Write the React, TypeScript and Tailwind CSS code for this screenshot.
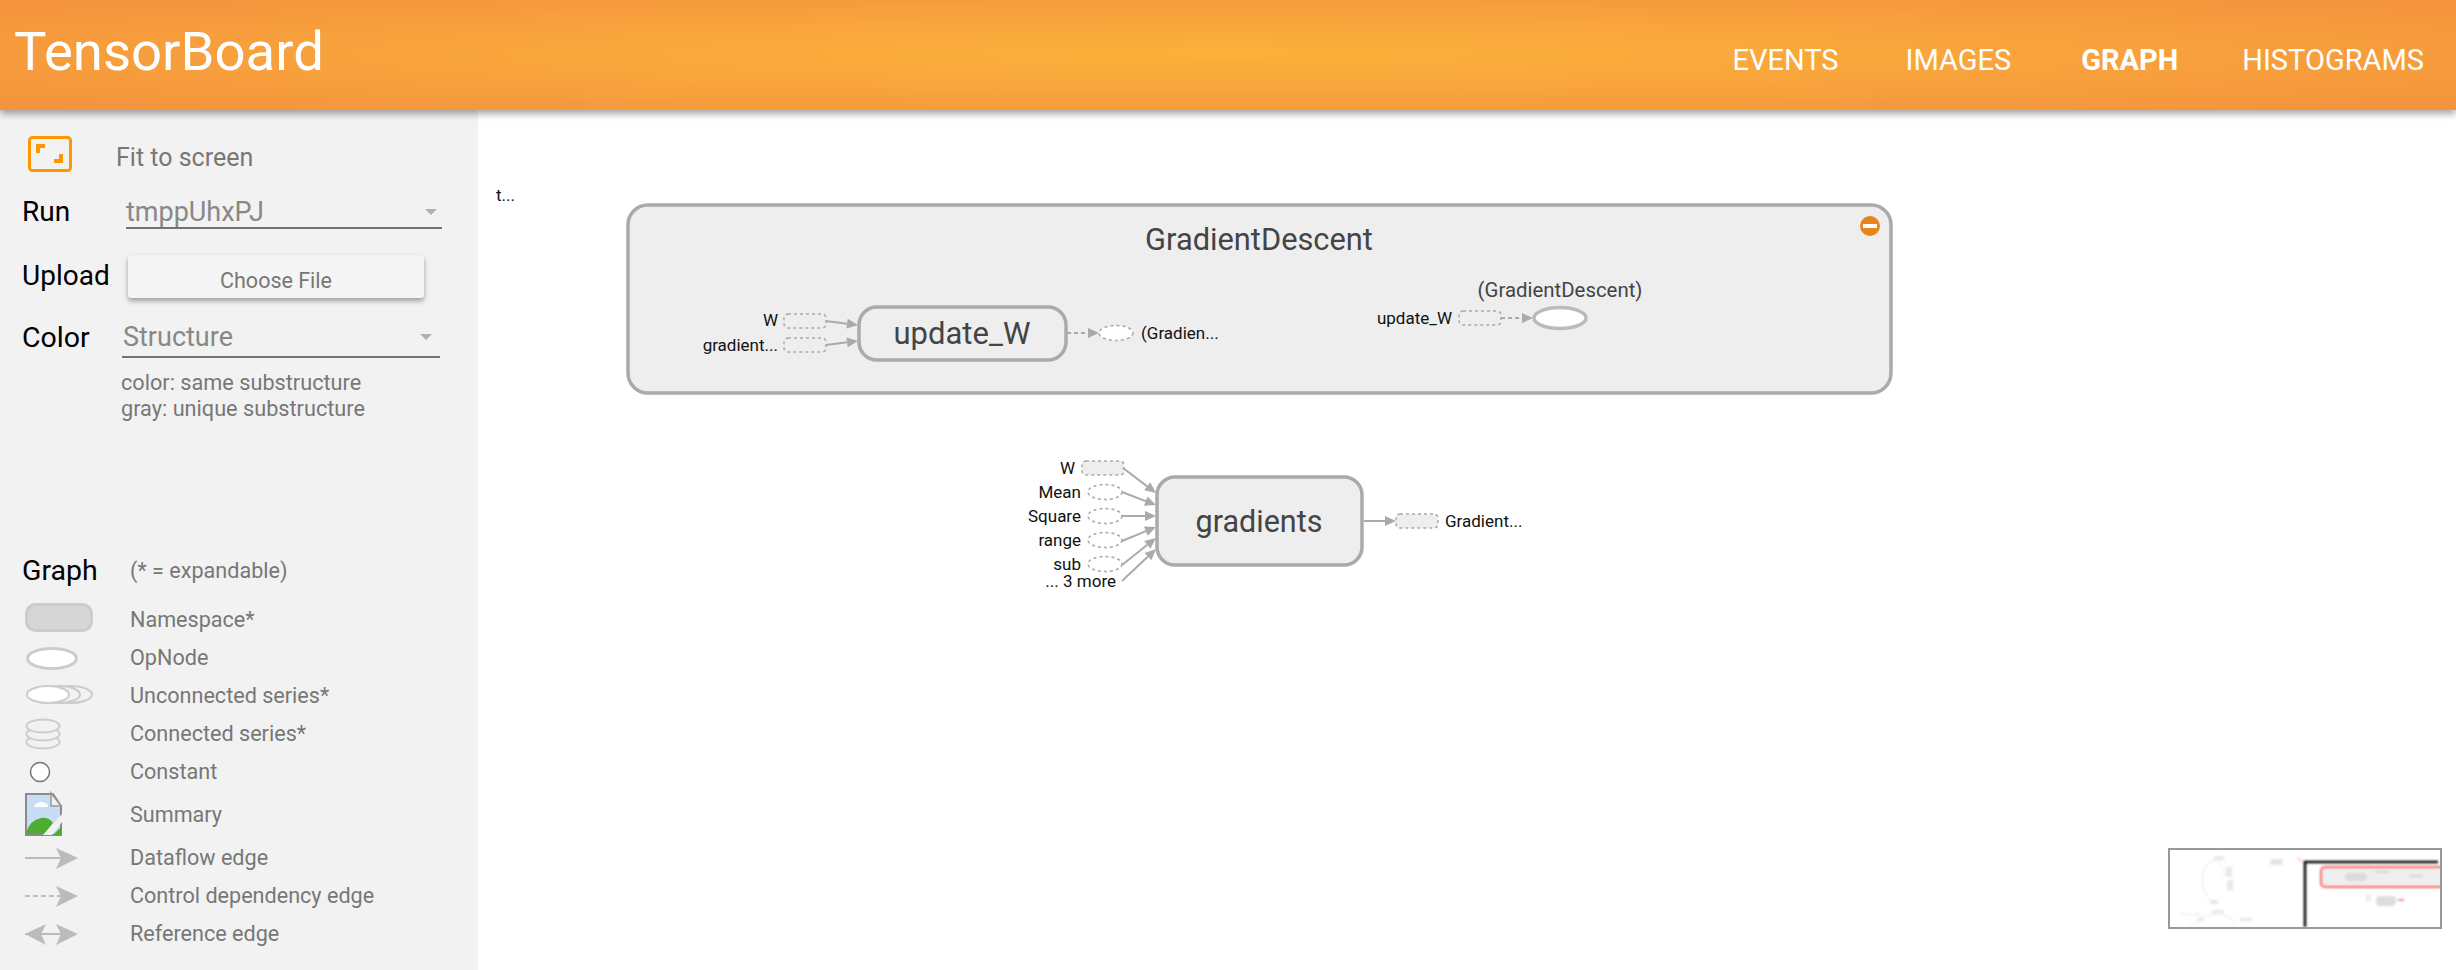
import React from "react";

const font = { fontFamily: "Roboto, sans-serif" };

function Caret() {
  return <span className="w-0 h-0 border-x-[6px] border-x-transparent border-t-[6px] border-t-[#b0b0b0]" />;
}

function LegendRow({ h, label, children }: { h: string; label: string; children?: React.ReactNode }) {
  return (
    <div className={`flex items-center ${h}`}>
      <svg className="w-[107px] h-full shrink-0 overflow-visible" viewBox={h === "h-[48px]" ? "0 0 107 48" : h === "h-[39px]" ? "0 0 107 39" : h === "h-[37px]" ? "0 0 107 37" : "0 0 107 38"}>
        {children}
      </svg>
      <span className="text-[21.6px] leading-none text-[#777] whitespace-nowrap">{label}</span>
    </div>
  );
}

function Arrow({ dash, both }: { dash?: boolean; both?: boolean }) {
  return (
    <g>
      <line x1="2" y1="19" x2="44" y2="19" stroke="#bbb" strokeWidth="2" strokeDasharray={dash ? "5 3" : undefined} />
      <polygon points="33,9 55,19 33,30 38,19" fill="#bbb" />
      {both && <polygon points="23,9 2,19 23,30 18,19" fill="#bbb" />}
    </g>
  );
}

function BrokenImage() {
  return (
    <g>
      <path d="M3 3h27l8 12v29h-35z" fill="#c9dcf5" stroke="#8a8a8a" strokeWidth="2" />
      <path d="M28 2v13h10z" fill="#f2f2f2" stroke="#999" strokeWidth="1.5" />
      <path d="M11 16q1-4 4-4q3-3 6 0q4 0 4 4z" fill="#fff" />
      <path d="M3 42q4-13 15-15q8-1 12 5l-9 11h-18z" fill="#4cae2e" />
      <path d="M39 23v8l-10 13h-9z" fill="#f2f2f2" />
      <path d="M30 44l8-8v8z" fill="#4cae2e" />
    </g>
  );
}

function Edge({ x1, y1, x2, y2, dash }: { x1: number; y1: number; x2: number; y2: number; dash?: boolean }) {
  const a = Math.atan2(y2 - y1, x2 - x1);
  const L = 11;
  const W = 5;
  const bx = x2 - L * Math.cos(a);
  const by = y2 - L * Math.sin(a);
  const px = -Math.sin(a) * W;
  const py = Math.cos(a) * W;
  return (
    <g>
      <line x1={x1} y1={y1} x2={bx} y2={by} stroke="#aaa" strokeWidth="2" strokeDasharray={dash ? "4 3" : undefined} />
      <polygon points={`${x2},${y2} ${bx + px},${by + py} ${bx - px},${by - py}`} fill="#aaa" />
    </g>
  );
}

function Label({ x, y, end, children }: { x: number; y: number; end?: boolean; children: string }) {
  return (
    <text x={x} y={y + 6} fontSize="17" fill="#111" textAnchor={end ? "end" : "start"}>
      {children}
    </text>
  );
}

function DashBox({ x, y, fill = "none" }: { x: number; y: number; fill?: string }) {
  return <rect x={x} y={y} width="42" height="14" rx="4" fill={fill} stroke="#aaa" strokeWidth="1.5" strokeDasharray="3 3" />;
}

function DashEllipse({ cx, cy, fill = "none" }: { cx: number; cy: number; fill?: string }) {
  return <ellipse cx={cx} cy={cy} rx="17" ry="7.5" fill={fill} stroke="#aaa" strokeWidth="1.5" strokeDasharray="3 3" />;
}

function Graph() {
  const inputs: [string, number][] = [
    ["Mean", 492],
    ["Square", 516],
    ["range", 540],
    ["sub", 564],
  ];
  return (
    <svg className="w-full h-full block" viewBox="478 110 1978 860" style={{ fontFamily: "Roboto, sans-serif" }}>
      <Label x={496} y={195}>t...</Label>

      <rect x="628" y="205" width="1263" height="188" rx="20" fill="#eee" stroke="#aaa" strokeWidth="3.5" />
      <text x="1259" y="250" fontSize="30.8" fill="#444" textAnchor="middle">GradientDescent</text>
      <circle cx="1870" cy="226" r="10" fill="#e8841d" />
      <rect x="1863" y="224" width="14" height="4" fill="#fff" />

      <Label x={778} y={320} end>W</Label>
      <Label x={778} y={345} end>gradient...</Label>
      <DashBox x={784} y={314} />
      <DashBox x={784} y={338} />
      <Edge x1={826} y1={321} x2={858} y2={325} />
      <Edge x1={826} y1={345} x2={858} y2={341} />
      <rect x="859" y="307" width="207" height="53" rx="18" fill="#eee" stroke="#aaa" strokeWidth="3.5" />
      <text x="962" y="344" fontSize="31" fill="#444" textAnchor="middle">update_W</text>
      <Edge x1={1067} y1={333} x2={1099} y2={333} dash />
      <DashEllipse cx={1116} cy={333} fill="#fff" />
      <Label x={1141} y={333}>(Gradien...</Label>

      <text x="1560" y="297" fontSize="20.4" fill="#444" textAnchor="middle">(GradientDescent)</text>
      <Label x={1452} y={318} end>update_W</Label>
      <DashBox x={1459} y={311} />
      <Edge x1={1501} y1={318} x2={1533} y2={318} dash />
      <ellipse cx="1560" cy="318" rx="26" ry="10.5" fill="#fff" stroke="#bbb" strokeWidth="3.5" />

      <Label x={1075} y={468} end>W</Label>
      <DashBox x={1082} y={461} fill="#eee" />
      <Edge x1={1123} y1={468} x2={1156} y2={493} />
      {inputs.map(([n, y]) => (
        <g key={n}>
          <Label x={1081} y={y} end>{n}</Label>
          <DashEllipse cx={1105} cy={y} />
        </g>
      ))}
      <Label x={1116} y={581} end>... 3 more</Label>
      <Edge x1={1122} y1={492} x2={1156} y2={505} />
      <Edge x1={1122} y1={516} x2={1156} y2={516} />
      <Edge x1={1122} y1={541} x2={1156} y2={527} />
      <Edge x1={1122} y1={565} x2={1156} y2={538} />
      <Edge x1={1122} y1={581} x2={1156} y2={549} />
      <rect x="1157" y="477" width="205" height="88" rx="18" fill="#eee" stroke="#aaa" strokeWidth="3.5" />
      <text x="1259" y="532" fontSize="30.5" fill="#444" textAnchor="middle">gradients</text>
      <Edge x1={1364} y1={521} x2={1396} y2={521} />
      <DashBox x={1396} y={514} fill="#eee" />
      <Label x={1445} y={521}>Gradient...</Label>
    </svg>
  );
}

function Minimap() {
  return (
    <div className="absolute right-[14px] bottom-[41px] w-[274px] h-[81px] border-2 border-[#999] bg-white overflow-hidden">
      <svg className="w-full h-full block" viewBox="0 0 270 77">
        <g style={{ filter: "blur(1px)" }}>
          <g fill="none" stroke="#e8e8e8" strokeWidth="1">
            <path d="M46 10q-14 4-14 20q0 16 14 24" />
            <path d="M46 10q10 8 8 16" />
            <path d="M44 60l0 4M20 76q10-10 24-12q16 0 22 10" />
            <line x1="10" y1="64" x2="30" y2="64" />
            <line x1="28" y1="62" x2="28" y2="76" />
          </g>
          <rect x="44" y="6" width="10" height="4" fill="#e8e8e8" />
          <rect x="56" y="17" width="6" height="10" fill="#e8e8e8" />
          <rect x="57" y="30" width="6" height="10" fill="#e8e8e8" />
          <rect x="40" y="50" width="8" height="4" fill="#e8e8e8" />
          <rect x="42" y="60" width="12" height="3" fill="#e8e8e8" />
          <rect x="28" y="68" width="6" height="3" fill="#e8e8e8" />
          <rect x="70" y="68" width="12" height="3" fill="#e8e8e8" />
          <rect x="100" y="9" width="13" height="6" rx="3" fill="#e4e4e4" />
          <line x1="127" y1="8" x2="133" y2="12" stroke="#f99" />
          <path d="M135 77V12h133" fill="none" stroke="#000" strokeWidth="2.5" />
          <rect x="151" y="17" width="125" height="20" rx="4" fill="#eee" stroke="#f66" strokeWidth="2" />
          <rect x="176" y="24" width="20" height="6" rx="3" fill="#ddd" stroke="#bbb" strokeWidth="0.5" />
          <rect x="205" y="21" width="14" height="1.5" fill="#ccc" />
          <rect x="240" y="25" width="12" height="1.5" fill="#ccc" />
          <rect x="206" y="46" width="20" height="10" rx="4" fill="#ddd" />
          <rect x="228" y="49" width="6" height="2" fill="#f88" />
          <rect x="196" y="44" width="5" height="8" fill="#eee" />
        </g>
      </svg>
    </div>
  );
}

export default function App() {
  return (
    <div className="relative w-full h-screen overflow-hidden bg-white flex flex-col" style={font}>
      <header className="relative z-10 h-[110px] shrink-0 flex items-start justify-between bg-[radial-gradient(ellipse_at_center,#fcb23a_0%,#f4923e_100%)] shadow-[0_4px_7px_rgba(0,0,0,0.35)] text-white pl-[14px] pr-[32px]">
        <div className="text-[54.5px] leading-none mt-[24px]">TensorBoard</div>
        <nav className="flex gap-[67px] text-[29px] leading-none mt-[46px]">
          <span>EVENTS</span>
          <span>IMAGES</span>
          <span className="font-bold ml-[3px] mr-[-3px]">GRAPH</span>
          <span>HISTOGRAMS</span>
        </nav>
      </header>
      <div className="flex flex-1 min-h-0">
        <aside className="w-[478px] shrink-0 bg-[#f2f2f2] pl-[22px] flex flex-col">
          <div className="h-[73px] flex items-center">
            <svg className="w-[44px] h-[36px] ml-[6px] mt-[14px]" viewBox="0 0 44 36" fill="none">
              <rect x="1.5" y="1.5" width="41" height="33" rx="3" stroke="#ff9800" strokeWidth="3" />
              <path d="M8 17V8h9v4h-5v5zM35 18v9h-9v-4h5v-5z" fill="#ff9800" />
            </svg>
            <span className="ml-[44px] text-[25px] leading-none text-[#777] mt-[21px]">Fit to screen</span>
          </div>
          <div className="h-[60px] flex items-center">
            <span className="w-[104px] text-[28px] leading-none text-black mt-[-2px]">Run</span>
            <div className="w-[316px] h-[36px] mt-[-4px] pt-[4px] border-b-2 border-[#737373] flex items-center justify-between pr-[5px] text-[27px] leading-none text-[#888]">
              <span>tmppUhxPJ</span>
              <Caret />
            </div>
          </div>
          <div className="h-[66px] flex items-center">
            <span className="w-[106px] text-[28px] leading-none text-black">Upload</span>
            <div className="w-[296px] h-[43px] bg-[#f5f5f5] rounded-[3px] shadow-[0_3px_5px_rgba(0,0,0,0.35)] flex items-center justify-center pt-[10px] text-[21.5px] leading-none text-[#777]">
              Choose File
            </div>
          </div>
          <div className="h-[58px] flex items-center">
            <span className="w-[100px] text-[28.5px] leading-none text-black">Color</span>
            <div className="w-[318px] h-[40px] border-b-2 border-[#737373] flex items-center justify-between pr-[8px] pl-[1px] text-[27px] leading-none text-[#888]">
              <span>Structure</span>
              <Caret />
            </div>
          </div>
          <div className="ml-[99px] mt-[3px] text-[21.7px] leading-[26px] text-[#777]">
            <div>color: same substructure</div>
            <div>gray: unique substructure</div>
          </div>
          <div className="mt-[129px] h-[40px] flex items-center">
            <span className="w-[108px] text-[28.5px] leading-none text-black">Graph</span>
            <span className="text-[21.6px] leading-none text-[#777]">(* = expandable)</span>
          </div>
          <div className="flex flex-col mt-[10px] ml-[1px]">
            <LegendRow h="h-[38px]" label="Namespace*">
              <rect x="3.5" y="3.5" width="65" height="26" rx="9" fill="#d6d6d6" stroke="#ccc" strokeWidth="3" />
            </LegendRow>
            <LegendRow h="h-[38px]" label="OpNode">
              <ellipse cx="29" cy="19.5" rx="24.5" ry="10" fill="#fff" stroke="#ccc" strokeWidth="3" />
            </LegendRow>
            <LegendRow h="h-[37px]" label="Unconnected series*">
              <ellipse cx="48" cy="17.5" rx="21" ry="8.5" fill="#f2f2f2" stroke="#ccc" strokeWidth="2" />
              <ellipse cx="36" cy="17.5" rx="21" ry="8.5" fill="#f2f2f2" stroke="#ccc" strokeWidth="2" />
              <ellipse cx="25" cy="17.5" rx="21" ry="8.5" fill="#fff" stroke="#ccc" strokeWidth="2" />
            </LegendRow>
            <LegendRow h="h-[39px]" label="Connected series*">
              <ellipse cx="20" cy="28" rx="16.5" ry="6.5" fill="#f2f2f2" stroke="#ccc" strokeWidth="2" />
              <ellipse cx="20" cy="20" rx="16.5" ry="6.5" fill="#f2f2f2" stroke="#ccc" strokeWidth="2" />
              <ellipse cx="20" cy="12" rx="16.5" ry="6.5" fill="#f2f2f2" stroke="#ccc" strokeWidth="2" />
            </LegendRow>
            <LegendRow h="h-[38px]" label="Constant">
              <circle cx="17" cy="19" r="9.5" fill="#fff" stroke="#777" strokeWidth="1.5" />
            </LegendRow>
            <LegendRow h="h-[48px]" label="Summary">
              <BrokenImage />
            </LegendRow>
            <LegendRow h="h-[38px]" label="Dataflow edge">
              <Arrow />
            </LegendRow>
            <LegendRow h="h-[38px]" label="Control dependency edge">
              <Arrow dash />
            </LegendRow>
            <LegendRow h="h-[38px]" label="Reference edge">
              <Arrow both />
            </LegendRow>
          </div>
        </aside>
        <main className="relative flex-1 min-w-0">
          <Graph />
          <Minimap />
        </main>
      </div>
    </div>
  );
}
